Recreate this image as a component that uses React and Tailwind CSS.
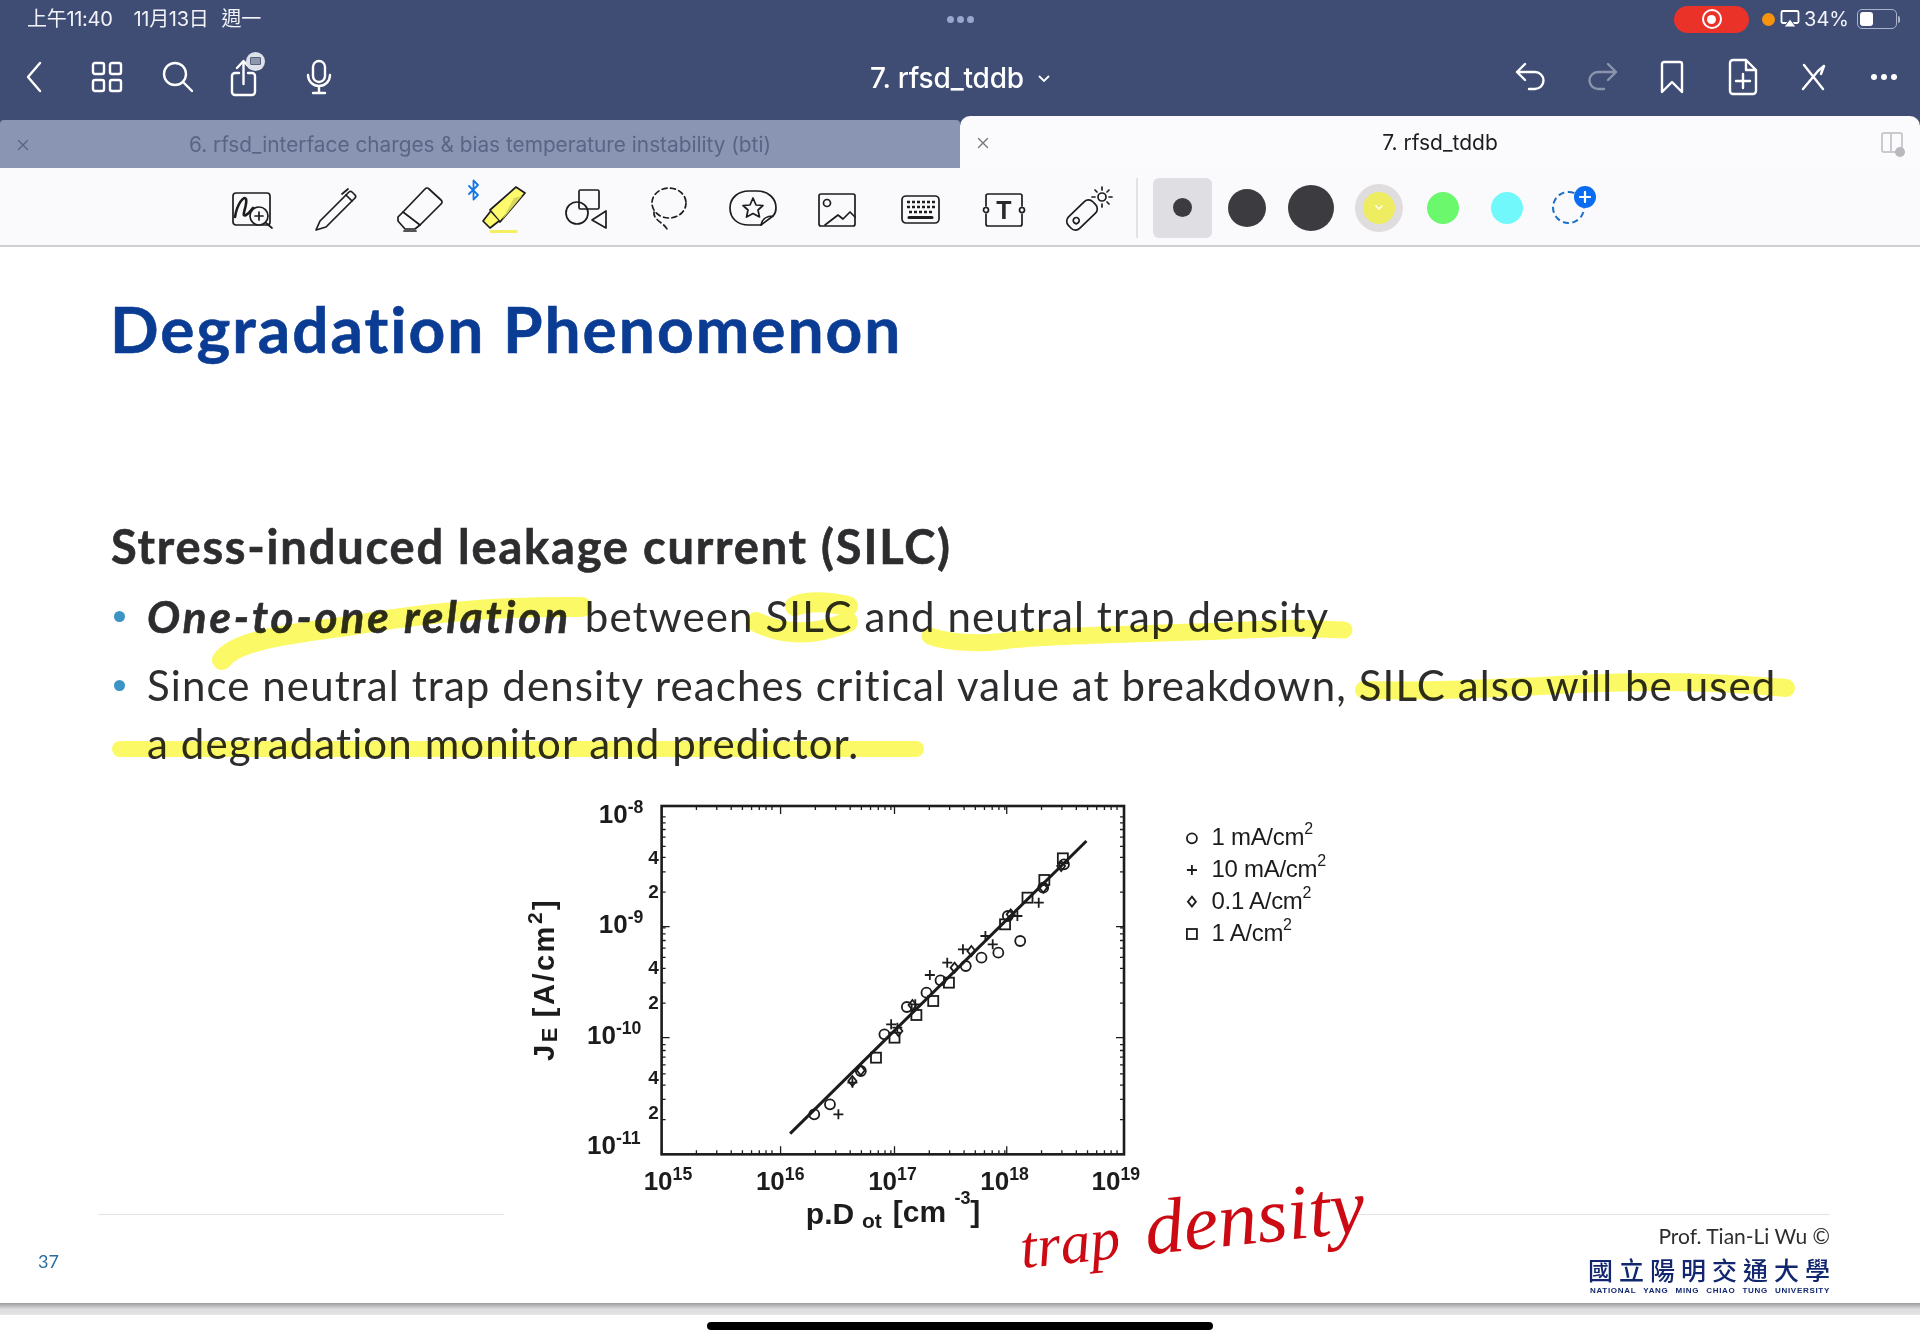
import React from 'react';

const X = (z) => z / 1.782;
const Y = (z) => z / 3;

function NavIcon({ children, w = 36, h = 40, className = '' }) {
  return (
    <svg width={w} height={h} viewBox={`0 0 ${w} ${h}`} fill="none" stroke="currentColor" strokeWidth="2.4" strokeLinecap="round" strokeLinejoin="round" className={className}>
      {children}
    </svg>
  );
}

function NavItem({ children, w = 'w-[71px]' }) {
  return <div className={`${w} h-full flex items-center justify-center text-white`}>{children}</div>;
}

function ToolIcon({ children }) {
  return (
    <div className="w-[83.5px] flex justify-center shrink-0">
      <svg width="48" height="48" viewBox="0 0 48 48" fill="none" stroke="#1d1d1f" strokeWidth="1.7" strokeLinecap="round" strokeLinejoin="round" className="overflow-visible">
        {children}
      </svg>
    </div>
  );
}

function StatusBar() {
  return (
    <div className="h-[37px] grid grid-cols-[1fr_auto_1fr] items-center text-white text-[20px] pt-[1px]">
      <div className="pl-[27px] flex gap-[21px] text-[#f2f3f8] tracking-[-0.3px]">
        <span>上午11:40</span>
        <span className="flex gap-[13px]"><span>11月13日</span><span>週一</span></span>
      </div>
      <div className="flex gap-[3px]">
        <span className="w-[7px] h-[7px] rounded-full bg-[#9aa6cb]" />
        <span className="w-[7px] h-[7px] rounded-full bg-[#9aa6cb]" />
        <span className="w-[7px] h-[7px] rounded-full bg-[#9aa6cb]" />
      </div>
      <div className="flex items-center justify-end pr-[20px]">
        <div className="w-[75px] h-[27px] rounded-full bg-[#ea3228] flex items-center justify-center">
          <span className="w-[20px] h-[20px] rounded-full border-[2px] border-white flex items-center justify-center">
            <span className="w-[9px] h-[9px] rounded-full bg-white" />
          </span>
        </div>
        <span className="ml-[13px] w-[13px] h-[13px] rounded-full bg-[#f7930f]" />
        <svg width="20" height="20" viewBox="0 0 20 20" fill="none" className="ml-[5px]">
          <rect x="1.5" y="2" width="17" height="12" rx="1.5" stroke="white" strokeWidth="1.8" />
          <path d="M10 10 L16 18 H4 Z" fill="white" stroke="#3f4d75" strokeWidth="1" />
        </svg>
        <span className="ml-[4px] mr-[3px] text-[20px] text-[#f2f3f8]">34%</span>
        <div className="ml-[5px] w-[40px] h-[20px] rounded-[5px] border border-[#aab2cc] p-[2px] flex">
          <span className="w-[13px] h-full rounded-[3px] bg-white" />
        </div>
        <span className="w-[2px] h-[7px] bg-[#aab2cc] ml-[1px] rounded-r" />
      </div>
    </div>
  );
}

function NavBar() {
  return (
    <div className="h-[79px] grid grid-cols-[1fr_auto_1fr] items-center">
      <div className="flex items-center h-full">
        <NavItem>
          <NavIcon w={20} h={34} className="-ml-[4px]"><path d="M16 3 L4 17 L16 31" /></NavIcon>
        </NavItem>
        <NavItem>
          <NavIcon w={32} h={32}>
            <rect x="2" y="2" width="11" height="11" rx="2" />
            <rect x="19" y="2" width="11" height="11" rx="2" />
            <rect x="2" y="19" width="11" height="11" rx="2" />
            <rect x="19" y="19" width="11" height="11" rx="2" />
          </NavIcon>
        </NavItem>
        <NavItem>
          <NavIcon w={34} h={34}>
            <circle cx="14" cy="14" r="11" />
            <path d="M22 22 L31 31" />
          </NavIcon>
        </NavItem>
        <NavItem>
          <div className="relative -ml-[7px]">
            <NavIcon w={30} h={40}>
              <path d="M9 16 H5 a3 3 0 0 0 -3 3 V35 a3 3 0 0 0 3 3 H22 a3 3 0 0 0 3 -3 V19 a3 3 0 0 0 -3 -3 H18" />
              <path d="M13.5 27 V5 M7 11 L13.5 4 L20 11" />
            </NavIcon>
            <span className="absolute -top-[5px] left-[16px] w-[19px] h-[19px] rounded-full bg-[#dfe1ea] flex items-center justify-center">
              <span className="w-[11px] h-[8px] rounded-[1px] border border-[#55607f] bg-[#8e96ad]" />
            </span>
          </div>
        </NavItem>
        <NavItem>
          <NavIcon w={28} h={36} className="-ml-[2px]">
            <rect x="8" y="2" width="12" height="21" rx="6" />
            <path d="M3 16 a11 11 0 0 0 22 0 M14 27 V33 M8 34 H20" />
          </NavIcon>
        </NavItem>
      </div>
      <div className="flex items-center pt-[3px] text-white text-[28px] font-medium tracking-[-0.2px]">
        <span>7. rfsd_tddb</span>
        <svg width="12" height="8" viewBox="0 0 12 8" fill="none" className="ml-[14px] mt-[2px]">
          <path d="M1.5 1.5 L6 6 L10.5 1.5" stroke="white" strokeWidth="1.8" strokeLinecap="round" />
        </svg>
      </div>
      <div className="flex items-center justify-end h-full pr-[1px]">
        <NavItem w="w-[70.5px]">
          <NavIcon w={34} h={32}>
            <path d="M11 3 L3 11 L11 19 M3 11 H21 a8 8 0 0 1 0 17 H15" />
          </NavIcon>
        </NavItem>
        <NavItem w="w-[70.5px]">
          <NavIcon w={34} h={32} className="opacity-40">
            <path d="M23 3 L31 11 L23 19 M31 11 H13 a8 8 0 0 0 0 17 H19" />
          </NavIcon>
        </NavItem>
        <NavItem w="w-[70.5px]">
          <NavIcon w={26} h={36}>
            <path d="M3 5 a2 2 0 0 1 2 -2 H21 a2 2 0 0 1 2 2 V33 L13 23 L3 33 Z" />
          </NavIcon>
        </NavItem>
        <NavItem w="w-[70.5px]">
          <NavIcon w={32} h={38}>
            <path d="M19 2 H6 a3 3 0 0 0 -3 3 V33 a3 3 0 0 0 3 3 H26 a3 3 0 0 0 3 -3 V12 Z M19 2 V12 H29" />
            <path d="M16 16 V30 M9 23 H23" />
          </NavIcon>
        </NavItem>
        <NavItem w="w-[70.5px]">
          <NavIcon w={28} h={28}>
            <path d="M5 2 L24 26 M25 3 L19 8 L4 26" />
            <path d="M25 3 L22 11" />
          </NavIcon>
        </NavItem>
        <NavItem w="w-[70.5px]">
          <div className="flex gap-[4px]">
            <span className="w-[6px] h-[6px] rounded-full bg-white" />
            <span className="w-[6px] h-[6px] rounded-full bg-white" />
            <span className="w-[6px] h-[6px] rounded-full bg-white" />
          </div>
        </NavItem>
      </div>
    </div>
  );
}

function CloseX({ color }) {
  return (
    <svg width="12" height="12" viewBox="0 0 12 12" fill="none" className="shrink-0">
      <path d="M1.5 1.5 L10.5 10.5 M10.5 1.5 L1.5 10.5" stroke={color} strokeWidth="1.4" strokeLinecap="round" />
    </svg>
  );
}

function TabBar() {
  return (
    <div className="h-[52px] flex items-end">
      <div className="relative w-[960px] h-[48px] bg-[#8a94b3] rounded-t-[4px] flex items-center justify-center pt-[2px] text-[#5b6485] text-[20.8px]">
        <span className="absolute left-[17px] top-[19px]"><CloseX color="#5b6485" /></span>
        6. rfsd_interface charges &amp; bias temperature instability (bti)
      </div>
      <div className="relative w-[960px] h-[52px] bg-[#fbfbfd] rounded-t-[10px] flex items-center justify-center pt-[2px] text-[#1d1d1f] text-[21px]">
        <span className="absolute left-[17px] top-[21px]"><CloseX color="#77777c" /></span>
        7. rfsd_tddb
        <span className="absolute right-[17px] top-[16px] w-[22px] h-[21px] rounded-[3px] border-2 border-[#c9c9ce] flex">
          <span className="w-1/2 border-r-2 border-[#c9c9ce]" />
        </span>
        <span className="absolute right-[15px] top-[31px] w-[10px] h-[10px] rounded-full bg-[#b8b8bd]" />
      </div>
    </div>
  );
}

function ToolBar() {
  return (
    <div className="h-[79px] pt-[2px] bg-[#fafafd] border-b-2 border-[#cfcfd2] flex items-center pl-[210px]">
      <ToolIcon>
        <rect x="5" y="9" width="37" height="32" rx="3" />
        <path d="M7 33 C9 20 16 11 18 15 C20 21 12 34 18 31 C22 29 23 26 25 24" strokeWidth="2.6" />
        <circle cx="31" cy="32" r="9" fill="#fafafd" />
        <path d="M31 28 V36 M27 32 H35 M38 39 L44 44" />
      </ToolIcon>
      <ToolIcon>
        <path d="M5 46 L9 37 L35 11 L41 17 L15 43 Z" />
        <path d="M35 11 L38 8 a2 2 0 0 1 3 0 l3 3 a2 2 0 0 1 0 3 L41 17 M31 10 L37 5" />
      </ToolIcon>
      <ToolIcon>
        <path d="M30 5 a2.5 2.5 0 0 1 4 0 L46 16 a2.5 2.5 0 0 1 0 4 L25 41 L8 28 Z" />
        <path d="M8 28 L3 33 V37 L10 45 H20 L25 41 M9 47 H21" />
      </ToolIcon>
      <ToolIcon>
        <path d="M-9 2 L0 11 L-4.5 15.5 V-3.5 L0 1 L-9 10" stroke="#1577e6" strokeWidth="1.8" />
        <path d="M38 3 L47 9 L22 38 L12 26 Z" fill="#fdfb6d" />
        <path d="M36 14 L44 12 L24 36 Z" fill="#d8d65c" stroke="none" />
        <path d="M12 28 L5 37 L12 44 L21 37" fill="#fdfb6d" />
        <path d="M13 47.5 H38" stroke="#f3ef5e" strokeWidth="3" />
      </ToolIcon>
      <ToolIcon>
        <rect x="17" y="6" width="20" height="19" rx="1.5" />
        <circle cx="15" cy="29" r="11" />
        <path d="M44 27 V44 L30 36 Z" />
      </ToolIcon>
      <ToolIcon>
        <ellipse cx="24" cy="19" rx="17" ry="15" strokeDasharray="5 3.5" />
        <path d="M9 28 C8 36 18 38 22 45" strokeDasharray="5 3.5" />
      </ToolIcon>
      <ToolIcon>
        <path d="M32 41 H20 C8 41 1 34 1 24 C1 14 9 7 20 7 H28 C39 7 47 14 47 24 C47 27 46 30 44 32 C38 32 33 35 32 41 Z" />
        <path d="M32 41 L44 32" />
        <path d="M24 14 L27 21 L34 21.5 L29 26 L30.5 33 L24 29.5 L17.5 33 L19 26 L14 21.5 L21 21 Z" />
      </ToolIcon>
      <ToolIcon>
        <rect x="7" y="10" width="36" height="32" rx="2" />
        <circle cx="15" cy="19" r="3.5" />
        <path d="M13 41 L26 31 L31 35 L38 28 L43 33" />
      </ToolIcon>
      <ToolIcon>
        <rect x="6" y="12" width="37" height="27" rx="4" />
        <path d="M11 18 H39 M11 23 H39 M13 28 H37" strokeDasharray="3 2" strokeWidth="2.4" strokeLinecap="butt" />
        <path d="M13 33.5 H36" strokeWidth="3" />
      </ToolIcon>
      <ToolIcon>
        <path d="M7 22 V12 a2 2 0 0 1 2 -2 H41 a2 2 0 0 1 2 2 V22 M7 30 V40 a2 2 0 0 0 2 2 H41 a2 2 0 0 0 2 -2 V30" />
        <circle cx="7" cy="26" r="2.5" />
        <circle cx="43" cy="26" r="2.5" />
        <text x="25" y="35" textAnchor="middle" fontSize="25" fontWeight="700" fontFamily="'Liberation Sans', sans-serif" fill="#2a2a2c" stroke="none">T</text>
      </ToolIcon>
      <ToolIcon>
        <g transform="translate(19 31) rotate(-44)">
          <rect x="-17" y="-8" width="34" height="16" rx="6" />
          <circle cx="-8" cy="0" r="3" />
        </g>
        <circle cx="39" cy="13" r="4" />
        <path d="M39 3 V6 M39 20 V23 M29 13 H32 M46 13 H49 M32 6 L34 8 M44 18 L46 20 M46 6 L44 8" />
      </ToolIcon>
      <div className="ml-[7px] w-[2px] h-[60px] bg-[#e2e2e5] shrink-0" />
      <div className="ml-[15px] w-[59px] h-[60px] rounded-[6px] bg-[#dfdee2] flex items-center justify-center">
        <span className="w-[19px] h-[19px] rounded-full bg-[#3c3c40]" />
      </div>
      <div className="ml-[3px] w-[64px] flex justify-center">
        <span className="w-[38px] h-[38px] rounded-full bg-[#3c3c40]" />
      </div>
      <div className="w-[64px] flex justify-center">
        <span className="w-[46px] h-[46px] rounded-full bg-[#3c3c40]" />
      </div>
      <div className="ml-[4px] w-[64px] flex justify-center">
        <span className="w-[48px] h-[48px] rounded-full bg-[#dfdddd] flex items-center justify-center">
          <span className="w-[32px] h-[32px] rounded-full bg-[#eeec60] flex items-center justify-center">
            <svg width="10" height="7" viewBox="0 0 10 7" fill="none"><path d="M1.5 1.5 L5 5 L8.5 1.5" stroke="white" strokeWidth="1.5" /></svg>
          </span>
        </span>
      </div>
      <div className="w-[64px] flex justify-center">
        <span className="w-[32px] h-[32px] rounded-full bg-[#6cf86c]" />
      </div>
      <div className="w-[64px] flex justify-center">
        <span className="w-[32px] h-[32px] rounded-full bg-[#70f8fb]" />
      </div>
      <div className="relative w-[60px] flex justify-center">
        <span className="w-[33px] h-[33px] rounded-full border-2 border-dashed border-[#1a6ec8]" />
        <span className="absolute left-[35px] -top-[5px] w-[22px] h-[22px] rounded-full bg-[#0a6cf0] flex items-center justify-center text-white">
          <svg width="12" height="12" viewBox="0 0 12 12" fill="none"><path d="M6 1 V11 M1 6 H11" stroke="white" strokeWidth="2.2" strokeLinecap="round" /></svg>
        </span>
      </div>
    </div>
  );
}

function Sup({ x, y, base, exp, size = 26 }) {
  return (
    <text x={X(x)} y={Y(y)} fontSize={size} fontWeight="700" fill="#1c1c1c">
      {base}
      <tspan dy={-10} fontSize={size * 0.68}>{exp}</tspan>
    </text>
  );
}

const decadeLog = [2, 3, 4, 5, 6, 7, 8, 9].map((n) => Math.log10(n));

function Chart() {
  const xMajor = [288, 500, 703, 903];
  const yMajor = [1120, 770, 437];
  const circles = [[560, 1000], [588, 970], [643, 870], [685, 760], [725, 678], [760, 635], [785, 598], [830, 555], [858, 530], [888, 515], [927, 480], [1005, 250], [968, 320], [905, 405]];
  const pluses = [[603, 1000], [628, 905], [697, 730], [708, 740], [740, 670], [766, 582], [797, 545], [825, 505], [865, 465], [878, 490], [922, 405], [960, 365]];
  const diamonds = [[643, 868], [628, 900], [710, 750], [735, 672], [810, 560], [840, 510], [910, 400], [968, 320], [1000, 255]];
  const squares = [[670, 830], [703, 770], [742, 702], [772, 660], [800, 605], [900, 430], [940, 350], [970, 297], [1003, 232]];
  const legend = [['1 mA/cm', 175], ['10 mA/cm', 270], ['0.1 A/cm', 365], ['1 A/cm', 462]];
  const stroke = { stroke: '#1c1c1c', fill: 'none' };

  const marker = (type, x, y, key) => {
    const cx = X(x);
    const cy = Y(y);
    if (type === 'circle') return <circle key={key} cx={cx} cy={cy} r="5" strokeWidth="1.8" {...stroke} />;
    if (type === 'plus') return <path key={key} d={`M${cx - 5} ${cy} H${cx + 5} M${cx} ${cy - 5} V${cy + 5}`} strokeWidth="1.8" {...stroke} />;
    if (type === 'diamond') return <path key={key} d={`M${cx} ${cy - 5} L${cx + 4} ${cy} L${cx} ${cy + 5} L${cx - 4} ${cy} Z`} strokeWidth="1.8" {...stroke} />;
    return <rect key={key} x={cx - 5} y={cy - 5} width="10" height="10" strokeWidth="1.8" {...stroke} />;
  };

  return (
    <div className="relative z-10 ml-[504px] mt-[9px] w-[852px] h-[500px] bg-white">
      <svg width="856" height="500" viewBox="0 0 856 500" className="-ml-[4px] overflow-visible" fontFamily="'Liberation Sans', sans-serif">
        <rect x={X(288)} y={Y(75)} width={X(1112 - 288)} height={Y(1120 - 75)} strokeWidth="2.6" {...stroke} />

        {xMajor.map((m, i) => (
          <g key={i} strokeWidth="1.3" stroke="#1c1c1c">
            <path d={`M${X(m)} ${Y(1120)} v-8 M${X(m)} ${Y(75)} v8`} />
            {decadeLog.map((l) => (
              <path key={l} d={`M${X(m + l * 206)} ${Y(1120)} v-4 M${X(m + l * 206)} ${Y(75)} v4`} />
            ))}
          </g>
        ))}
        {yMajor.map((m, i) => (
          <g key={i} strokeWidth="1.3" stroke="#1c1c1c">
            <path d={`M${X(288)} ${Y(m)} h8 M${X(1112)} ${Y(m)} h-8`} />
            {decadeLog.map((l) => (
              <path key={l} d={`M${X(288)} ${Y(m - l * 345)} h4 M${X(1112)} ${Y(m - l * 345)} h-4`} />
            ))}
          </g>
        ))}

        <path d={`M${X(517)} ${Y(1058)} L${X(1045)} ${Y(180)}`} strokeWidth="3" {...stroke} />
        {circles.map(([x, y], i) => marker('circle', x, y, `c${i}`))}
        {pluses.map(([x, y], i) => marker('plus', x, y, `p${i}`))}
        {diamonds.map(([x, y], i) => marker('diamond', x, y, `d${i}`))}
        {squares.map(([x, y], i) => marker('square', x, y, `s${i}`))}

        <Sup x={176} y={125} base="10" exp="-8" />
        <Sup x={176} y={457} base="10" exp="-9" />
        <Sup x={155} y={789} base="10" exp="-10" />
        <Sup x={155} y={1119} base="10" exp="-11" />
        {[[229, '4'], [329, '2'], [559, '4'], [662, '2'], [889, '4'], [992, '2']].map(([y, t]) => (
          <text key={y} x={X(264)} y={Y(y) + 7} fontSize="19" fontWeight="700" fill="#1c1c1c">{t}</text>
        ))}

        <Sup x={256} y={1226} base="10" exp="15" />
        <Sup x={456} y={1226} base="10" exp="16" />
        <Sup x={656} y={1226} base="10" exp="17" />
        <Sup x={856} y={1226} base="10" exp="18" />
        <Sup x={1054} y={1226} base="10" exp="19" />

        <text x={X(545)} y={Y(1328)} fontSize="30" fontWeight="700" fill="#1c1c1c">p.D</text>
        <text x={X(645)} y={Y(1340)} fontSize="21" fontWeight="700" fill="#1c1c1c">ot</text>
        <text x={X(700)} y={Y(1323)} fontSize="30" fontWeight="700" fill="#1c1c1c">[cm</text>
        <text x={X(810)} y={Y(1268)} fontSize="18" fontWeight="700" fill="#1c1c1c">-3</text>
        <text x={X(838)} y={Y(1323)} fontSize="30" fontWeight="700" fill="#1c1c1c">]</text>

        <g transform={`translate(${X(96)} ${Y(840)}) rotate(-90)`}>
          <text x="0" y="0" fontSize="29" fontWeight="700" fill="#1c1c1c" letterSpacing="2.5">J
            <tspan fontSize="22" dy="3">E</tspan>
            <tspan fontSize="29" dy="-3" dx="8">[A/cm</tspan>
            <tspan fontSize="21" dy="-12">2</tspan>
            <tspan fontSize="29" dy="12">]</tspan>
          </text>
        </g>

        {legend.map(([label, y], i) => (
          <g key={label}>
            {marker(['circle', 'plus', 'diamond', 'square'][i], 1233, y - 3, `l${i}`)}
            <text x={X(1268)} y={Y(y) + 6} fontSize="24" fill="#1c1c1c" letterSpacing="-0.3">
              {label}
              <tspan dy="-11" fontSize="16">2</tspan>
            </text>
          </g>
        ))}
      </svg>
    </div>
  );
}

function Highlights() {
  return (
    <svg width="1920" height="1056" viewBox="0 247 1920 1056" fill="none" stroke="#fbfa66" strokeLinecap="round" className="absolute left-0 top-0 pointer-events-none mix-blend-multiply">
      <path d="M222 660 C236 640 290 634 348 626 C430 612 500 606 582 607" strokeWidth="20" />
      <path d="M756 622 C785 636 815 636 848 622 M795 606 C810 600 830 602 848 606" strokeWidth="20" />
      <path d="M930 636 C950 644 990 644 1010 640 C1065 634 1180 634 1294 628 L1344 630" strokeWidth="17" />
      <path d="M1364 690 C1450 692 1530 686 1600 683 C1690 680 1740 684 1786 688" strokeWidth="18" />
      <path d="M120 749 H916" strokeWidth="16" />
    </svg>
  );
}

function Slide() {
  return (
    <div className="relative h-[1056px] bg-white overflow-hidden font-['Lato',sans-serif] [font-variant-ligatures:none]">
      <div className="pl-[110px] pt-[42px] text-[#0a3c94] text-[64px] leading-[80px] font-bold tracking-[2px] [-webkit-text-stroke:0.6px_#0a3c94]">Degradation Phenomenon</div>
      <div className="pl-[111px] mt-[147px] text-[#2d2d30] text-[47px] leading-[60px] font-bold tracking-[1.8px] [-webkit-text-stroke:0.6px_#2d2d30]">Stress-induced leakage current (SILC)</div>
      <div className="pl-[112px] mt-[10px] text-[#2d2d30] text-[42px] tracking-[1.1px] whitespace-nowrap">
        <div className="flex items-center h-[60px]">
          <span className="w-[35px] shrink-0"><span className="block ml-[2px] w-[11px] h-[11px] rounded-full bg-[#3b94c3]" /></span>
          <span className="text-[44px] tracking-[2.9px] font-bold italic [-webkit-text-stroke:0.6px_#2d2d30]">One-to-one relation</span>
          <span className="ml-[14px]">between SILC and neutral trap density</span>
        </div>
        <div className="mt-[9px]">
          <div className="flex items-center h-[60px]">
            <span className="w-[35px] shrink-0"><span className="block ml-[2px] w-[11px] h-[11px] rounded-full bg-[#3b94c3]" /></span>
            <span>Since neutral trap density reaches critical value at breakdown, SILC also will be used</span>
          </div>
          <div className="pl-[35px] h-[57px] leading-[57px]">a degradation monitor and predictor.</div>
        </div>
      </div>
      <Chart />
      <div className="ml-[98px] mr-[90px] -mt-[67px] h-[90px] border-t border-[#e3e3e6] flex justify-between">
        <span className="-ml-[60px] mt-[35px] text-[18px] leading-[22px] text-[#2a6d9e]">37</span>
        <div className="flex flex-col items-end pt-[9px]">
          <span className="text-[21px] leading-[24px] text-[#2d2d30]">Prof. Tian-Li Wu ©</span>
          <span className="mt-[6px] w-[242px] text-[25px] leading-[30px] font-medium text-[#12276f] flex justify-between font-['Noto_Sans_CJK_TC',sans-serif]">
            <span>國</span><span>立</span><span>陽</span><span>明</span><span>交</span><span>通</span><span>大</span><span>學</span>
          </span>
          <span className="mt-[2px] w-[240px] text-[8px] leading-[10px] font-bold tracking-[0.7px] text-[#12276f] whitespace-nowrap flex justify-between font-['Liberation_Sans',sans-serif]">
            <span>NATIONAL</span><span>YANG</span><span>MING</span><span>CHIAO</span><span>TUNG</span><span>UNIVERSITY</span>
          </span>
        </div>
      </div>
      <Highlights />
      <span className="absolute z-20 left-[1020px] top-[966px] -rotate-6 text-[60px] leading-[60px] italic text-[#cc0a14] font-['Liberation_Serif',serif]">trap</span>
      <span className="absolute z-20 left-[1144px] top-[942px] -rotate-6 text-[78px] leading-[56px] italic text-[#cc0a14] font-['Liberation_Serif',serif]">density</span>
    </div>
  );
}

export default function App() {
  return (
    <div className="w-[1920px] h-[1342px] overflow-hidden bg-white font-['Inter','Noto_Sans_CJK_TC',sans-serif]">
      {/* Top chrome */}
      <div className="bg-[#3f4d75]">
        <StatusBar />
        <NavBar />
        <TabBar />
      </div>
      <ToolBar />
      <Slide />
      {/* Page shadow and home bar */}
      <div className="h-[12px] bg-linear-to-b from-[#9d9d9f] via-[#dcdcde] to-[#e6e6e8]" />
      <div className="flex justify-center pt-[7px]">
        <span className="w-[506px] h-[8px] rounded-full bg-black" />
      </div>
    </div>
  );
}
